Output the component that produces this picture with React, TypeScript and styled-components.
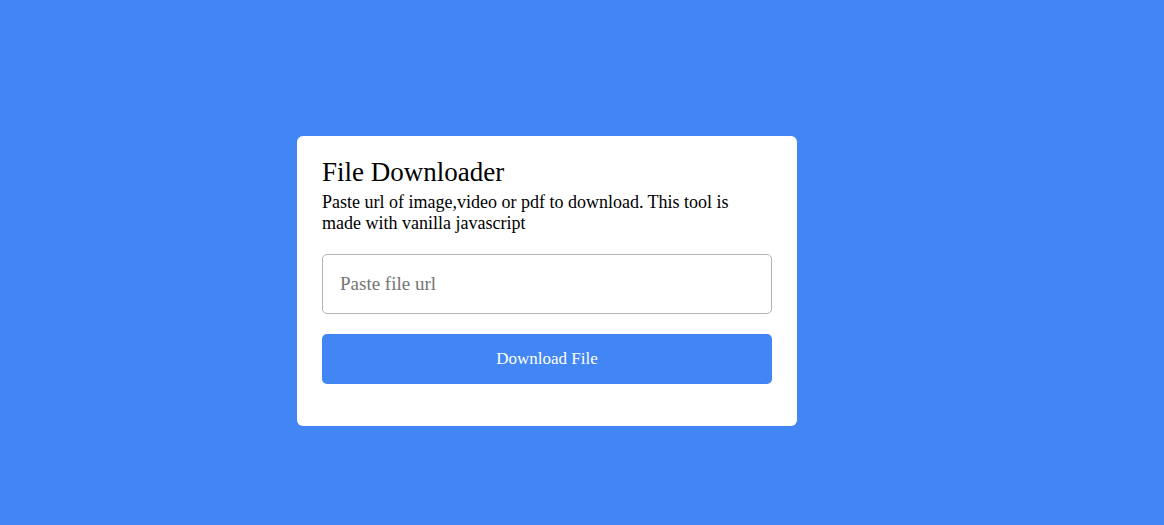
import React from "react";
import styled, { createGlobalStyle } from "styled-components";

const Global = createGlobalStyle`
  html, body { margin: 0; padding: 0; }
  body {
    background: #4286f5;
    font-family: "Liberation Serif", "Times New Roman", serif;
    height: 525px;
    overflow: hidden;
  }
`;

const Page = styled.div`
  height: 525px;
  box-sizing: border-box;
  padding: 136px 0 0 297px;
`;

const Card = styled.div`
  width: 500px;
  box-sizing: border-box;
  background: #fff;
  border-radius: 6px;
  padding: 21px 25px 42px;
`;

const Title = styled.h2`
  margin: 0;
  font-size: 27px;
  font-weight: 400;
  line-height: 30px;
  color: #000;
`;

const Desc = styled.p`
  margin: 5px 0 0;
  font-size: 18px;
  line-height: 21px;
  color: #000;
`;

const Form = styled.form`
  margin-top: 20px;
  display: flex;
  flex-direction: column;
  gap: 20px;
`;

const Input = styled.input`
  height: 60px;
  box-sizing: border-box;
  border: 1px solid #b3b3b3;
  border-radius: 5px;
  padding: 0 17px;
  font-family: inherit;
  font-size: 19px;
  outline: none;
  &::placeholder { color: #757575; }
`;

const Button = styled.button`
  height: 50px;
  border: none;
  border-radius: 5px;
  background: #4286f5;
  color: #fff;
  font-family: inherit;
  font-size: 17px;
  cursor: pointer;
`;

export default function App() {
  return (
    <>
      <Global />
      <Page>
        <Card>
          <Title>File Downloader</Title>
          <Desc>
            Paste url of image,video or pdf to download. This tool is made with vanilla javascript
          </Desc>
          <Form onSubmit={(e) => e.preventDefault()}>
            <Input type="url" placeholder="Paste file url" />
            <Button type="submit">Download File</Button>
          </Form>
        </Card>
      </Page>
    </>
  );
}
